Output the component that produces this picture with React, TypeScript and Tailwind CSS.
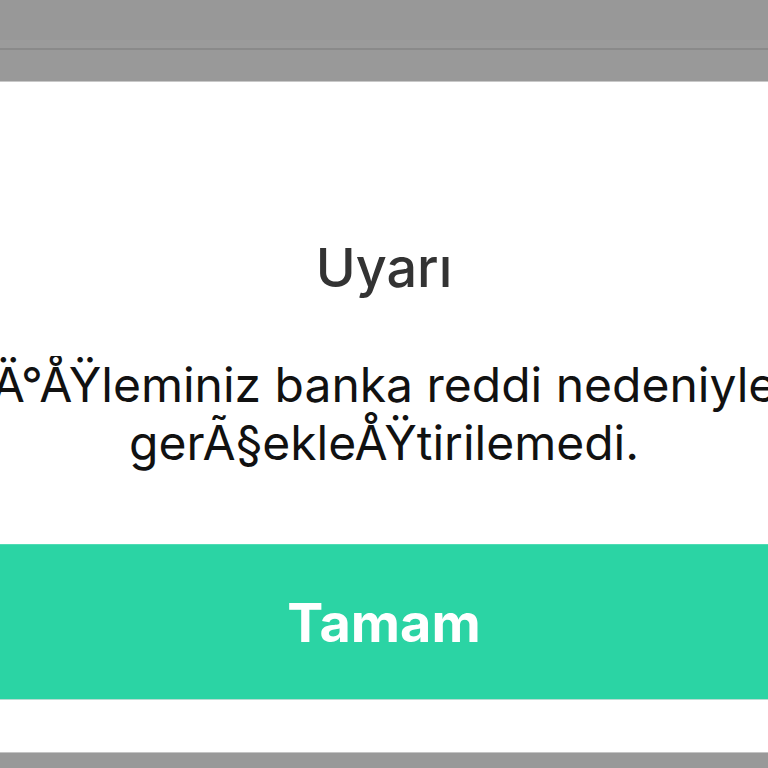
export default function App() {
  return (
    <div
      className="flex h-[768px] w-[768px] flex-col overflow-hidden bg-[#999999]"
      style={{ fontFamily: "Inter, 'Noto Sans', sans-serif" }}
    >
      {/* dimmed navigation bar behind the alert */}
      <div className="flex h-[82px] flex-col">
        <div className="h-[40px] bg-[#989898]" />
        <div className="h-[8px] bg-[#9b9b9b]" />
        <div className="h-[2px] bg-[#8a8a8a]" />
        <div className="flex-1 bg-[#999999]" />
        <div className="h-px bg-[#c8c8c8]" />
      </div>

      {/* alert panel */}
      <div className="flex h-[670px] flex-col bg-white">
        <div className="pt-[158px] text-center text-[54px] font-medium leading-[55px] text-[#333333]">
          Uyarı
        </div>

        <div className="mt-[61px] flex flex-col items-center overflow-hidden text-[48px] leading-[58px] text-[#111111]">
          <span className="whitespace-nowrap">Ä°ÅŸleminiz banka reddi nedeniyle</span>
          <span className="whitespace-nowrap">gerÃ§ekleÅŸtirilemedi.</span>
        </div>

        <div className="mt-[72px] flex h-[155px] items-center justify-center border-t border-[#4fdcb4] bg-[#2bd4a4]">
          <span className="text-[54px] font-bold text-white">Tamam</span>
        </div>
        <div className="h-px bg-[#b8dcd2]" />
      </div>

      <div className="h-px bg-[#c4c4c4]" />
      <div className="flex-1 bg-[#999999]" />
    </div>
  );
}
